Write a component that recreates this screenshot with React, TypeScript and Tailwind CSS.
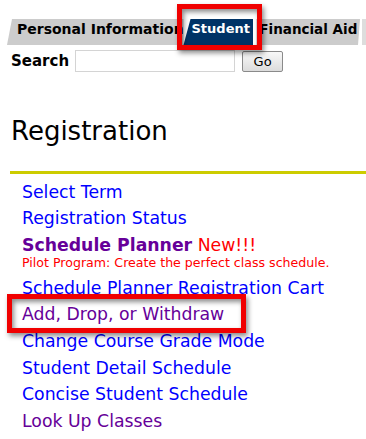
import React from 'react';

type LinkItem = { label: string; visited?: boolean };

const BEFORE: LinkItem[] = [
  { label: 'Select Term' },
  { label: 'Registration Status' },
];

const AFTER: LinkItem[] = [
  { label: 'Schedule Planner Registration Cart' },
  { label: 'Add, Drop, or Withdraw', visited: true },
  { label: 'Change Course Grade Mode' },
  { label: 'Student Detail Schedule' },
  { label: 'Concise Student Schedule' },
  { label: 'Look Up Classes', visited: true },
];

function MenuLink({ item }: { item: LinkItem }) {
  return (
    <li className="leading-[26.7px]">
      <a
        href="#"
        className={item.visited ? 'text-[#660099]' : 'text-[#0000ff]'}
      >
        {item.label}
      </a>
    </li>
  );
}

// cadre rouge d'annotation, avec ombre dedans et dehors
function Highlight({ className }: { className: string }) {
  return (
    <div
      className={[
        'pointer-events-none absolute border-[5px] border-[#f00000]',
        'shadow-[2px_3px_5px_rgba(0,0,0,0.45),inset_2px_3px_5px_rgba(0,0,0,0.45)]',
        className,
      ].join(' ')}
      aria-hidden="true"
    />
  );
}

export default function App() {
  return (
    <div className="relative h-[439px] w-[366px] overflow-hidden bg-white font-['DejaVu_Sans',Verdana,sans-serif] text-black">
      {/* Onglets */}
      <div className="ml-[7px] mt-[19px] flex h-[26px] font-bold leading-[16px]">
        <div className="w-[177px] overflow-hidden whitespace-nowrap bg-[#cccccc] pl-[10px] pt-[2px] text-[14px] [clip-path:polygon(5px_0,100%_0,100%_100%,0_100%)]">
          Personal Information
        </div>
        <div className="-ml-[1px] w-[71px] whitespace-nowrap bg-[#003366] pl-[9px] pt-[2px] text-[13px] text-white [clip-path:polygon(8px_0,100%_0,100%_100%,1px_100%)]">
          Student
        </div>
        <div className="ml-[3px] w-[104px] overflow-hidden whitespace-nowrap bg-[#cccccc] pl-[3px] pt-[2px] text-[13.5px] [clip-path:polygon(0_0,100%_0,calc(100%-2px)_100%,0_100%)]">
          Financial Aid
        </div>
        <div className="ml-[2px] w-[4px] bg-[#dddddd]" />
      </div>

      {/* Recherche */}
      <div className="ml-[11px] mt-[5px] flex items-center">
        <span className="text-[15px] font-bold">Search</span>
        <input
          type="text"
          className="ml-[6px] h-[22px] w-[160px] border border-[#d4d4d4] bg-white outline-none"
        />
        <button
          type="button"
          className="ml-[7px] h-[21px] w-[41px] rounded-[2px] border border-[#8a8a8a] bg-[linear-gradient(#f8f8f8,#dcdcdc)] text-[13px] leading-[19px]"
        >
          Go
        </button>
      </div>

      {/* Titre */}
      <h1 className="ml-[11px] mt-[41px] text-[26px] font-normal leading-[34px]">
        Registration
      </h1>
      <div className="ml-[10px] mt-[23px] h-[3px] bg-[#cccc00]" />

      {/* Liens */}
      <ul className="ml-[22px] mt-[5px] text-[17.3px]">
        {BEFORE.map((it) => (
          <MenuLink key={it.label} item={it} />
        ))}
        <li className="leading-[26.7px]">
          <a href="#" className="font-bold text-[#660099]">
            Schedule Planner
          </a>{' '}
          <span className="text-[#ff0000]">New!!!</span>
        </li>
        <li className="-mt-[4px] mb-[4px] text-[12.6px] leading-[16px] text-[#ff0000]">
          Pilot Program: Create the perfect class schedule.
        </li>
        {AFTER.map((it) => (
          <MenuLink key={it.label} item={it} />
        ))}
      </ul>

      <Highlight className="left-[177px] top-[4px] h-[46px] w-[85px]" />
      <Highlight className="left-[7px] top-[294px] h-[39px] w-[239px]" />
    </div>
  );
}
